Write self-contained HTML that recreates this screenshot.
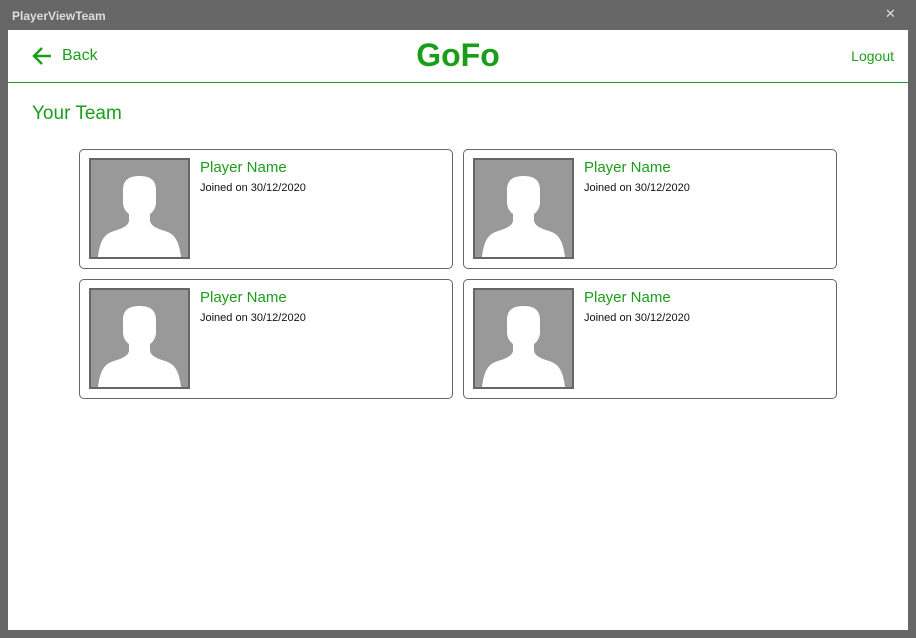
<!DOCTYPE html>
<html><head><style>
*{margin:0;padding:0;box-sizing:border-box}
body{width:916px;height:638px;background:#676767;font-family:"Liberation Sans",sans-serif;position:relative;overflow:hidden}
.title{position:absolute;left:12px;top:9px;color:#ddd;font-size:12px;font-weight:bold}
.x{position:absolute;left:885px;top:6px;color:#ddd;font-size:13px}
.main{position:absolute;left:8px;top:30px;width:900px;height:600px;background:#fff}
.hdr{position:absolute;left:0;top:0;width:900px;height:53px;border-bottom:1px solid #1a9e1a}
.g{color:#1a9e1a}
.back{position:absolute;left:54px;top:17px;font-size:16px}
.logo{position:absolute;left:0;width:900px;text-align:center;top:7px;font-size:32px;font-weight:bold}
.logout{position:absolute;right:14px;top:18px;font-size:14px}
.yt{position:absolute;left:24px;top:73px;font-size:19px}
.card{position:absolute;width:374px;height:120px;border:1px solid #666;border-radius:5px}
.pic{position:absolute;left:9px;top:8px;width:101px;height:101px;border:2px solid #666;background:#999;overflow:hidden}
.pn{position:absolute;left:120px;top:9px;font-size:15px}
.jd{position:absolute;left:120px;top:32px;font-size:11px;color:#111}
</style></head><body>
<div class="title">PlayerViewTeam</div><div class="x">✕</div>
<div class="main">
<div class="hdr">
<svg style="position:absolute;left:23px;top:16px" width="22" height="20" viewBox="0 0 22 20"><path d="M20 10H3M11 2L3 10l8 8" stroke="#1a9e1a" stroke-width="2.5" fill="none"/></svg>
<div class="back g">Back</div>
<div class="logo g">GoFo</div>
<div class="logout g">Logout</div>
</div>
<div class="yt g">Your Team</div>
</div>
<div id="c"></div>
<script>
var pos=[[79,149],[463,149],[79,279],[463,279]],h='';
pos.forEach(function(p){h+='<div class="card" style="left:'+p[0]+'px;top:'+p[1]+'px"><div class="pic"><svg width="97" height="97" viewBox="0 0 97 97"><path d="M32 30C32 20 38 16 48.5 16C59 16 65 20 65 30L65 42C65 48 62 52 59 54L59 60C59 65 64 68 74 71C84 74 88 81 90 97L7 97C9 81 13 74 23 71C33 68 38 65 38 60L38 54C35 52 32 48 32 42Z" fill="#fff"/></svg></div><div class="pn g">Player Name</div><div class="jd">Joined on 30/12/2020</div></div>'});
document.getElementById('c').innerHTML=h;
</script>
</body></html>
